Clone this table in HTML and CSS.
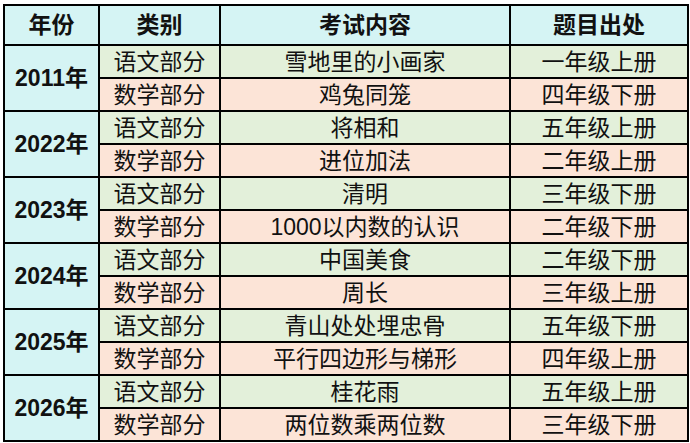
FILE: index.html
```html
<!DOCTYPE html>
<html lang="zh-CN">
<head>
<meta charset="utf-8">
<title>考试内容</title>
<link rel="stylesheet" href="styles.css">
</head>
<body>
<table class="exam">
  <colgroup>
    <col class="c-year">
    <col class="c-type">
    <col class="c-content">
    <col class="c-source">
  </colgroup>
  <thead>
    <tr class="head"><th>年份</th><th>类别</th><th>考试内容</th><th>题目出处</th></tr>
  </thead>
  <tbody>
    <tr class="yu"><td class="year" rowspan="2">2011年</td><td>语文部分</td><td>雪地里的小画家</td><td>一年级上册</td></tr>
    <tr class="shu"><td>数学部分</td><td>鸡兔同笼</td><td>四年级下册</td></tr>
    <tr class="yu"><td class="year" rowspan="2">2022年</td><td>语文部分</td><td>将相和</td><td>五年级上册</td></tr>
    <tr class="shu"><td>数学部分</td><td>进位加法</td><td>二年级上册</td></tr>
    <tr class="yu"><td class="year" rowspan="2">2023年</td><td>语文部分</td><td>清明</td><td>三年级下册</td></tr>
    <tr class="shu"><td>数学部分</td><td>1000以内数的认识</td><td>二年级下册</td></tr>
    <tr class="yu"><td class="year" rowspan="2">2024年</td><td>语文部分</td><td>中国美食</td><td>二年级下册</td></tr>
    <tr class="shu"><td>数学部分</td><td>周长</td><td>三年级上册</td></tr>
    <tr class="yu"><td class="year" rowspan="2">2025年</td><td>语文部分</td><td>青山处处埋忠骨</td><td>五年级下册</td></tr>
    <tr class="shu"><td>数学部分</td><td>平行四边形与梯形</td><td>四年级上册</td></tr>
    <tr class="yu"><td class="year" rowspan="2">2026年</td><td>语文部分</td><td>桂花雨</td><td>五年级上册</td></tr>
    <tr class="shu"><td>数学部分</td><td>两位数乘两位数</td><td>三年级下册</td></tr>
  </tbody>
</table>
</body>
</html>
```
FILE: styles.css
```css
html, body {
  margin: 0;
  padding: 0;
  background: #ffffff;
}

.exam {
  border-collapse: collapse;
  table-layout: fixed;
  margin: 4px 0 0 3px;
  width: 684px;
  font-family: "Liberation Sans", "Noto Sans CJK SC", sans-serif;
  font-size: 23px;
  color: #111111;
}

.c-year { width: 95px; }
.c-type { width: 121px; }
.c-content { width: 290px; }
.c-source { width: 178px; }

.exam th,
.exam td {
  border: 2px solid #000000;
  padding: 0;
  text-align: center;
  vertical-align: middle;
  line-height: 28px;
  white-space: nowrap;
  overflow: hidden;
}

.head th {
  height: 38px;
  background: #d5f4f4;
  font-weight: bold;
}

.exam tbody td {
  height: 31px;
}

.yu td { background: #e3f0da; }
.shu td { background: #fce4d7; }

.exam td.year {
  background: #d5f4f4;
  font-weight: bold;
}
```
